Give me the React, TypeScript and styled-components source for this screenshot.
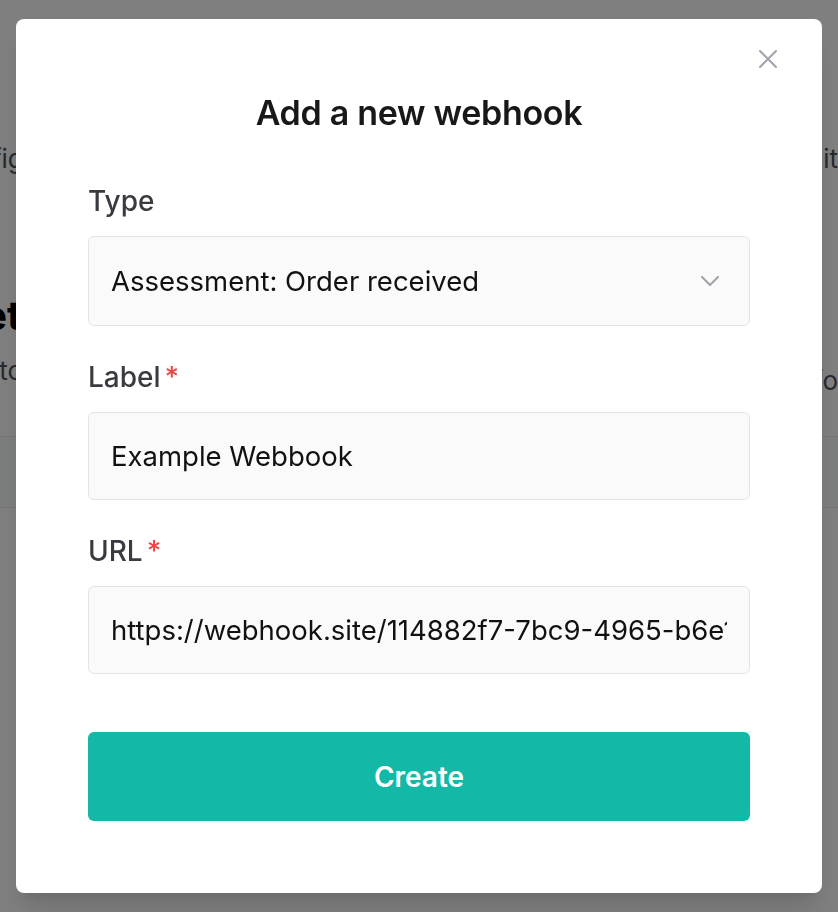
import React from "react";
import styled, { createGlobalStyle } from "styled-components";

const GlobalStyle = createGlobalStyle`
  html, body {
    margin: 0;
    padding: 0;
    height: 100%;
    overflow: hidden;
    background: #ffffff;
    font-family: Inter, "Noto Sans", "Liberation Sans", sans-serif;
  }
  * { box-sizing: border-box; }
`;

/* ---------- underlying page (dimmed by overlay) ---------- */

const Page = styled.div`
  padding-top: 142px;
  display: flex;
  flex-direction: column;
`;

const PeekRow = styled.div<{ $size: number; $color: string; $weight: number; $ml: number; $mr: number }>`
  display: flex;
  justify-content: space-between;
  align-items: flex-start;
  white-space: nowrap;
  font-size: ${(p) => p.$size}px;
  line-height: 1.3;
  color: ${(p) => p.$color};
  font-weight: ${(p) => p.$weight};
  margin-left: ${(p) => p.$ml}px;
  margin-right: ${(p) => p.$mr}px;
`;

const PeekText = styled.span<{ $dy?: number }>`
  margin-top: ${(p) => p.$dy ?? 0}px;
`;

const Spacer = styled.div<{ $h: number }>`
  height: ${(p) => p.$h}px;
`;

const TableArea = styled.div`
  margin-top: 38px;
  border-top: 1px solid #e5e7eb;
  border-bottom: 1px solid #e5e7eb;
  background: #f9fafb;
  height: 72px;
`;

/* ---------- modal ---------- */

const Overlay = styled.div`
  position: fixed;
  inset: 0;
  background: rgba(0, 0, 0, 0.5);
  display: flex;
  align-items: center;
  justify-content: center;
`;

const Modal = styled.div`
  position: relative;
  width: 806px;
  background: #ffffff;
  border-radius: 8px;
  padding: 74px 72px 72px;
  box-shadow: 0 20px 25px -5px rgba(0, 0, 0, 0.12), 0 10px 10px -5px rgba(0, 0, 0, 0.05);
  display: flex;
  flex-direction: column;
`;

const CloseButton = styled.button`
  position: absolute;
  top: 31px;
  right: 45px;
  width: 18px;
  height: 18px;
  padding: 0;
  border: 0;
  background: transparent;
  color: #a1a1aa;
  display: flex;
  cursor: pointer;
`;

const Title = styled.h2`
  margin: 0 0 51px;
  text-align: center;
  font-size: 34px;
  line-height: 40px;
  font-weight: 600;
  color: #18181b;
  letter-spacing: -0.3px;
`;

const Field = styled.div<{ $gapAfter: number }>`
  display: flex;
  flex-direction: column;
  gap: 18px;
  margin-bottom: ${(p) => p.$gapAfter}px;
`;

const Label = styled.label`
  font-size: 28px;
  line-height: 34px;
  font-weight: 500;
  color: #3a3a40;
  display: flex;
  align-items: flex-start;
`;

const Required = styled.span`
  color: #ef4444;
  margin-left: 4px;
`;

const SelectBox = styled.div`
  height: 90px;
  border: 1px solid #e4e4e7;
  border-radius: 6px;
  background: #fafafa;
  padding: 0 30px 0 22px;
  display: flex;
  align-items: center;
  justify-content: space-between;
  font-size: 27.5px;
  color: #111111;
`;

const Chevron = styled.span`
  display: flex;
  color: #a1a1aa;
`;

const TextInput = styled.input`
  height: 88px;
  width: 100%;
  border: 1px solid #e4e4e7;
  border-radius: 6px;
  background: #fafafa;
  padding: 0 22px;
  font-family: inherit;
  font-size: 27.5px;
  color: #111111;
  outline: none;
`;

const PrimaryButton = styled.button`
  margin-top: 24px;
  height: 89px;
  width: 100%;
  border: 0;
  border-radius: 6px;
  background: #14b8a6;
  color: #ffffff;
  font-family: inherit;
  font-size: 28px;
  font-weight: 600;
  cursor: pointer;
`;

export default function App() {
  return (
    <>
      <GlobalStyle />
      <Page aria-hidden="true">
        <PeekRow $size={26} $color="#52525b" $weight={400} $ml={-58} $mr={0}>
          <PeekText>Configure webhooks</PeekText>
          <PeekText>submit</PeekText>
        </PeekRow>
        <Spacer $h={114} />
        <PeekRow $size={40} $color="#000000" $weight={700} $ml={-43} $mr={0}>
          <PeekText>Settings</PeekText>
        </PeekRow>
        <Spacer $h={12} />
        <PeekRow $size={26} $color="#52525b" $weight={400} $ml={-34} $mr={0}>
          <PeekText>Automation</PeekText>
          <PeekText $dy={10}>Info</PeekText>
        </PeekRow>
        <TableArea />
      </Page>

      <Overlay>
        <Modal role="dialog" aria-labelledby="webhook-title">
          <CloseButton aria-label="Close">
            <svg width="18" height="18" viewBox="0 0 18 18" fill="none" stroke="currentColor" strokeWidth="2" strokeLinecap="round">
              <path d="M1 1L17 17M17 1L1 17" />
            </svg>
          </CloseButton>

          <Title id="webhook-title">Add a new webhook</Title>

          <Field $gapAfter={34}>
            <Label>Type</Label>
            <SelectBox>
              <span>Assessment: Order received</span>
              <Chevron>
                <svg width="18" height="10" viewBox="0 0 18 10" fill="none" stroke="currentColor" strokeWidth="2" strokeLinecap="round" strokeLinejoin="round">
                  <path d="M1 1L9 9L17 1" />
                </svg>
              </Chevron>
            </SelectBox>
          </Field>

          <Field $gapAfter={34}>
            <Label>
              Label<Required>*</Required>
            </Label>
            <TextInput defaultValue="Example Webbook" />
          </Field>

          <Field $gapAfter={34}>
            <Label>
              URL<Required>*</Required>
            </Label>
            <TextInput defaultValue="https://webhook.site/114882f7-7bc9-4965-b6e1-3c2a9d0f5e21" />
          </Field>

          <PrimaryButton>Create</PrimaryButton>
        </Modal>
      </Overlay>
    </>
  );
}
